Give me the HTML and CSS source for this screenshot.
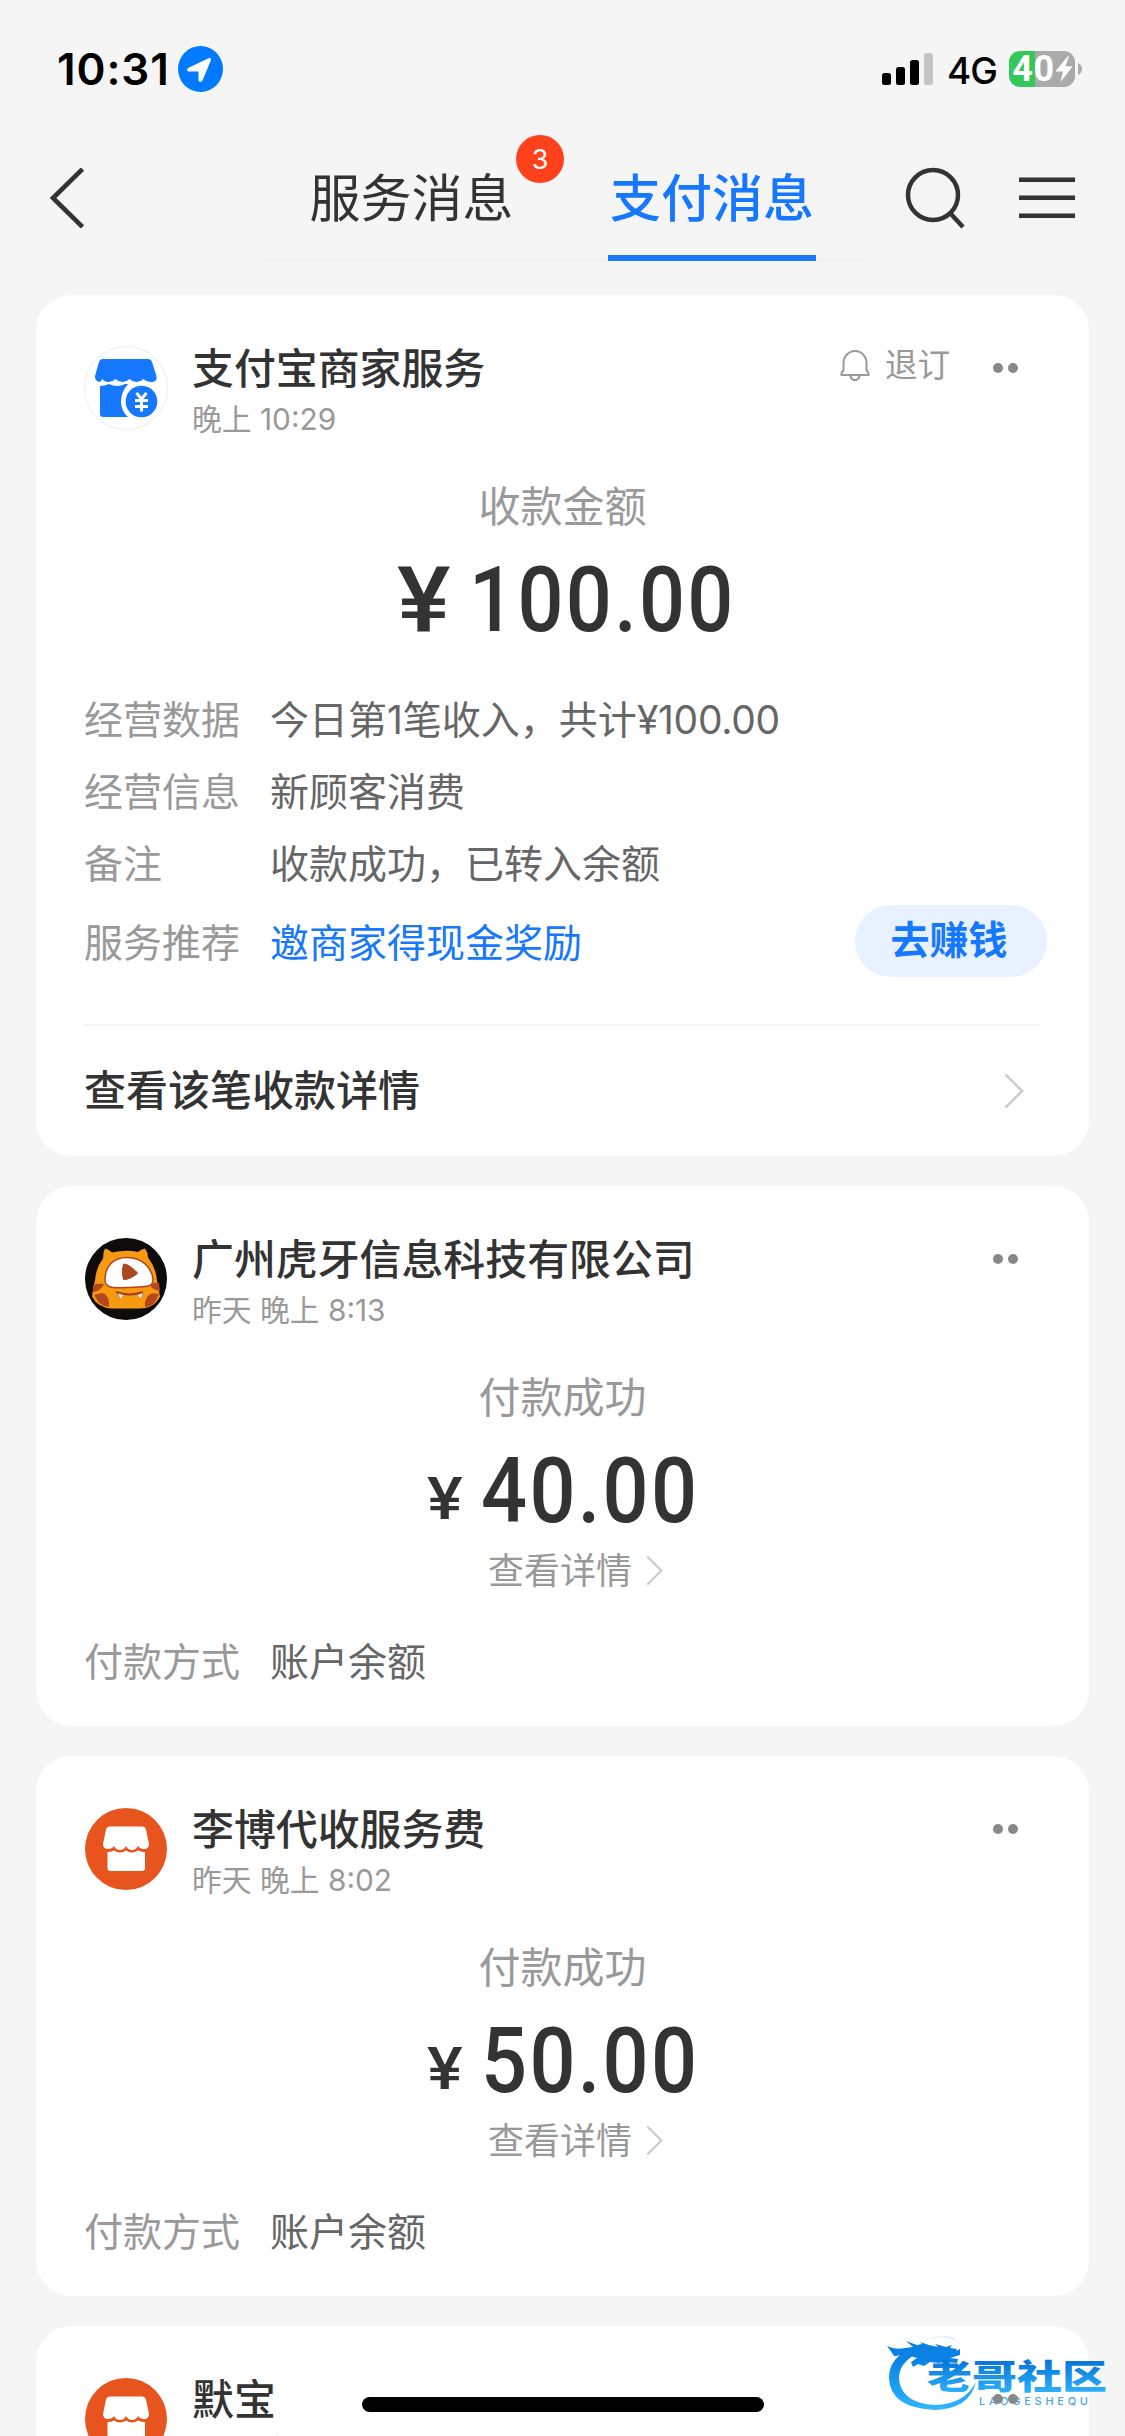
FILE: index.html
```html
<!DOCTYPE html>
<html lang="zh-CN">
<head>
<meta charset="utf-8">
<title>支付消息</title>
<link rel="stylesheet" href="styles.css">
</head>
<body>
<svg width="0" height="0" class="defs">
  <symbol id="shop" viewBox="0 0 84 84">
    <circle cx="42" cy="42" r="41" fill="#e8541e"/>
    <path d="M26 19.500h32q3 0 4 3l3 14.500q0 5-5 5-4 0-6-3-2 4-6 4t-6-4q-2 4-6 4t-6-4q-2 3-6 3-5 0-5-5l3-14.500q1-3 4-3z" fill="#fff"/>
    <path d="M23.500 45q4 0 6.500-1.500 3 2 6 2t6-2q3 2 6 2t6-2q3 1.500 7 1.500v16q0 3-3 3H26.500q-3 0-3-3z" fill="#fff"/>
  </symbol>
  <symbol id="arrow" viewBox="0 0 20 36"><path d="M1.500 1.500 18 18 1.500 34.500" fill="none" stroke="#ccc" stroke-width="2.600"/></symbol>
</svg>
<div class="screen">
  <div class="status">
    <span class="time">10:31</span>
    <svg class="loc" viewBox="0 0 45 46"><ellipse cx="22.500" cy="23" rx="22.500" ry="23" fill="#007aff"/><path d="M10 22 30.500 12.300q3-1 2.300 2.200L24.500 34.500q-2.500 3-4-.2V25.500H11q-3.400-.8-1-3.500z" fill="#fff"/></svg>
    <svg class="signal" viewBox="0 0 52 32"><rect y="20" width="9" height="12" rx="2.500"/><rect x="14" y="14" width="9" height="18" rx="2.500"/><rect x="28" y="7" width="9" height="25" rx="2.500"/><rect x="42" width="9" height="32" rx="2.500" fill="#c4c4c4"/></svg>
    <span class="net">4G</span>
    <div class="battery"><span>40</span><svg viewBox="0 0 16 26"><path d="M12 0 0 14.500q-.4 1 .6 1H7L4.500 26 16 11.300q.3-1-.7-1H9.500L12.800.6z" fill="#fff"/></svg></div>
    <svg class="nub" viewBox="0 0 4 12"><path d="M0 0q4 2 4 6t-4 6z" fill="#aaa"/></svg>
  </div>
  <div class="nav">
    <svg class="back" viewBox="0 0 36 60"><path d="M33.500 1 4 30l29.500 29" fill="none" stroke="#333" stroke-width="4.600"/></svg>
    <div class="tabs">
      <div class="tab">服务消息<span class="badge">3</span></div>
      <div class="tab active">支付消息</div>
    </div>
    <svg class="search" viewBox="0 0 62 62"><circle cx="28" cy="28" r="25" fill="none" stroke="#333" stroke-width="4.500"/><path d="M45 46 58 60" stroke="#333" stroke-width="4.500"/></svg>
    <svg class="menu" viewBox="0 0 56 42"><path d="M0 2.800h56M0 20.800h56M0 38.800h56" stroke="#333" stroke-width="4.400"/></svg>
  </div>

  <div class="card first">
    <div class="head">
      <svg class="avatar" viewBox="0 0 84 84"><circle cx="42" cy="42" r="41.400" fill="#fff" stroke="#f1f1f1" stroke-width="1.200"/>
        <path d="M19 13h45q3 0 4 3l4.500 14q1 6-5 6-5 0-8-3-3 3-7 3t-7-3q-3 3-7 3t-7-3q-3 3-7 3t-6-3q-2 3-3 3-5-1-4.500-6L15 16q1-3 4-3z" fill="#1677ff"/>
        <path d="M16 40q5 0 9-2 4 2 8 2t8-2h3q-7 8-7 18 0 9 7 15H19q-3 0-3-3z" fill="#1677ff"/>
        <circle cx="57.500" cy="55.500" r="15.800" fill="#1677ff"/>
        <path d="M52.500 47l5 6 5-6M51 54.500h13M51 60.500h13M57.500 53v12.500" stroke="#fff" stroke-width="3" fill="none"/></svg>
      <div class="who"><div class="name">支付宝商家服务</div><div class="when">晚上 10:29</div></div>
      <div class="unsub"><svg viewBox="0 0 30 32"><path d="M3.500 21V14a11.500 12 0 0 1 23 0v7q2.500 3 2 5H1.500q-.5-2 2-5z" fill="none" stroke="#999" stroke-width="2"/><path d="M10.500 26.500q.5 4.500 4.500 4.500t4.500-4.500" fill="none" stroke="#999" stroke-width="2.200"/></svg>退订</div>
      <div class="dots"><i></i><i></i></div>
    </div>
    <div class="caption">收款金额</div>
    <div class="amount large"><b class="yen">¥</b><b class="num">100.00</b></div>
    <div class="rows">
      <div class="row"><span>经营数据</span><em>今日第1笔收入，共计<u>¥100.00</u></em></div>
      <div class="row"><span>经营信息</span><em>新顾客消费</em></div>
      <div class="row"><span>备注</span><em>收款成功，已转入余额</em></div>
      <div class="row tall"><span>服务推荐</span><em class="link">邀商家得现金奖励</em><div class="pill">去赚钱</div></div>
    </div>
    <div class="foot"><div>查看该笔收款详情</div><svg><use href="#arrow"/></svg></div>
  </div>

  <div class="card">
    <div class="head">
      <svg class="avatar" viewBox="0 0 84 84"><circle cx="42" cy="42" r="41" fill="#0d0c0a"/>
        <path d="M21 11.500q4 1 7 4 14-3 26-.5 3-3 7-3.500 3 4 3 9 8 10 9 23l3 16q-6 12-20 12H28Q14 71 8 59.500q1-9 3-16 1-13 8-22 0-6 2-10z" fill="#f79a12"/>
        <path d="M9 48q5-2 11-1-3 7-11 8zM75 46q-5-1-9 2 2 5 10 6zM10 58q7-3 11-1 5 5 4 13-6-1-10-4zM75 57q-8-2-10 1-5 5-4 12 6 0 10-5z" fill="#b4481a"/>
        <path d="M43 20.500c16 0 25 11 26 22 0 8-5 7-27 8-17 1-21-1-21-8 0-13 8-22 22-22z" fill="#fff" stroke="#b4481a" stroke-width="1.500"/>
        <path d="M39.500 27q3-.5 8 3.500t6 5.500q-1 2-6 4.500t-8 2q-2.500-8 0-15.500z" fill="#ac4722" stroke="#ac4722" stroke-width="1"/>
        <path d="M32 55q13 5 27 0" fill="none" stroke="#a33b14" stroke-width="2"/><path d="M34 56.500l2 6 4-4.500zM53 58l4 4 2-6z" fill="#fff" stroke="#c76a20" stroke-width=".6"/></svg>
      <div class="who"><div class="name">广州虎牙信息科技有限公司</div><div class="when">昨天 晚上 8:13</div></div>
      <div class="dots"><i></i><i></i></div>
    </div>
    <div class="caption">付款成功</div>
    <div class="amount"><b class="yen">¥</b><b class="num">40.00</b></div>
    <div class="detail"><div>查看详情</div><svg><use href="#arrow"/></svg></div>
    <div class="row"><span>付款方式</span><em>账户余额</em></div>
  </div>

  <div class="card">
    <div class="head">
      <svg class="avatar"><use href="#shop"/></svg>
      <div class="who"><div class="name">李博代收服务费</div><div class="when">昨天 晚上 8:02</div></div>
      <div class="dots"><i></i><i></i></div>
    </div>
    <div class="caption">付款成功</div>
    <div class="amount"><b class="yen">¥</b><b class="num">50.00</b></div>
    <div class="detail"><div>查看详情</div><svg><use href="#arrow"/></svg></div>
    <div class="row"><span>付款方式</span><em>账户余额</em></div>
  </div>

  <div class="card">
    <div class="head">
      <svg class="avatar"><use href="#shop"/></svg>
      <div class="who"><div class="name">默宝</div><div class="when">昨天 晚上</div></div>
      <div class="dots"><i></i><i></i></div>
    </div>
  </div>

  <svg class="mark" viewBox="0 0 225 84">
    <defs><linearGradient id="g" gradientUnits="userSpaceOnUse" x1="0" y1="10" x2="0" y2="80"><stop offset="0" stop-color="#0a7fe0"/><stop offset=".3" stop-color="#0a84e6"/><stop offset="1" stop-color="#2fb8ff"/></linearGradient>
    <linearGradient id="t" x1="0" y1="0" x2="0" y2="1"><stop offset=".25" stop-color="#0878dc"/><stop offset=".9" stop-color="#2fb4fb"/></linearGradient></defs>
    <path d="M27 18Q4 26 4 47q1 30 46 32 34-1 41-28-11 22-41 23-33-2-36-25-1-17 19-27z" fill="url(#g)"/>
    <path d="M2 15q8 4 18 2l8-1-7-6 11 4 5-1-2-2 9 3 9 2-3-3 11 3 6-2-2 3 7 1-1 2 4-2v6l-10 3 8 1-1 4-12-1-6 1-9-1-6 4-6-2-5 3-2-5 6-4-10-3-13 1Q6 20 2 15z" fill="url(#g)"/>
    <path d="M45 8q12-5 26 1M58 5q9 0 14 6" fill="none" stroke="#d9eefb" stroke-width="1"/>
    <text x="42" y="58" class="mark-cn" textLength="180" lengthAdjust="spacingAndGlyphs" fill="url(#t)">老哥社区</text>
    <text x="94" y="74" class="mark-en" textLength="109" fill="#4ba6e4">LAOGESHEQU</text>
  </svg>
  <div class="home"></div>
</div>
</body>
</html>
```
FILE: styles.css
```css
* { box-sizing: border-box; }
body { margin: 0; background: #f5f5f5; }
.defs { position: absolute; }
.screen { position: relative; width: 1125px; height: 2436px; overflow: hidden; background: #f5f5f5; font-family: Inter, "Noto Sans CJK SC", sans-serif; color: #333; }
svg { display: block; flex: none; }
.status { display: flex; align-items: center; height: 138px; padding-left: 57px; color: #000; }
.time { width: 121px; font-size: 44px; font-weight: 600; letter-spacing: 0.9px; }
.loc { width: 45px; height: 46px; }
.signal { width: 52px; height: 32px; margin-left: 659px; }
.net { margin-left: 13px; width: 62px; font-size: 37px; font-weight: 450; letter-spacing: -1px; line-height: 1; padding-top: 2px; }
.battery { display: flex; align-items: center; justify-content: center; gap: 1px; width: 66px; height: 36px; border-radius: 11px; background: linear-gradient(90deg, #34c759 26px, #aaa 26px); color: #fff; font-size: 36px; font-weight: 700; }
.battery span { font-family: Roboto, sans-serif; line-height: 36px; letter-spacing: 0.5px; }
.battery svg { width: 16px; height: 26px; }
.nub { width: 4px; height: 12px; margin-left: 3px; }
.nav { display: flex; height: 157px; padding-left: 49px; }
.back { width: 36px; height: 60px; margin-top: 30px; }
.tabs { display: flex; gap: 90px; width: 600px; height: 123px; margin-left: 177px; padding-left: 45px; border-bottom: 1px solid #ebebeb; }
.tab { position: relative; height: 123px; width: 209px; text-align: center; font-size: 51px; line-height: 122px; }
.active { width: 208px; margin-left: 2px; color: #1677ff; font-weight: 500; border-bottom: 6px solid #1677ff; }
.badge { position: absolute; left: 209px; top: -3px; width: 48px; height: 48px; border-radius: 50%; background: #ff411c; color: #fff; font-size: 27px; line-height: 49px; }
.search { width: 62px; height: 62px; margin: 29px 0 0 43px; }
.menu { width: 56px; height: 42px; margin: 39px 0 0 52px; }
.card { width: 1053px; height: 540px; margin: 0 0 30px 36px; padding: 51px 48px 0; border-radius: 36px; background: #fff; }
.first { height: 861px; }
.head { display: flex; height: 84px; }
.avatar { width: 84px; height: 84px; }
.who { flex: 1; margin-left: 24px; white-space: nowrap; }
.name { margin-top: -5px; font-size: 41.900px; line-height: 56px; font-weight: 500; }
.when { font-size: 29.800px; line-height: 44px; color: #999; }
.unsub { display: flex; gap: 15px; height: 36px; font-size: 32.500px; line-height: 36px; color: #999; margin: 2px 43px 0 0; }
.unsub svg { width: 30px; height: 32px; margin-top: 1px; }
.dots { position: relative; z-index: 3; display: flex; gap: 5px; height: 10px; margin: 17px 23px 0 0; }
.dots i { width: 10px; height: 10px; border-radius: 50%; background: #888; }
.caption { margin-top: 49px; text-align: center; font-size: 42px; line-height: 56px; color: #999; }
.amount { display: flex; align-items: baseline; height: 100px; margin-top: 16px; padding-left: 343px; font-family: Roboto, sans-serif; line-height: 100px; }
.amount b { font-weight: 500; transform-origin: left; }
.yen { width: 38px; margin-right: 16px; font-size: 60px; transform: translateY(-3px) scaleX(1.12); }
.num { font-size: 90px; letter-spacing: 2.600px; transform: scaleX(0.9); }
.large { padding-left: 313px; }
.large .yen { width: 57px; margin-right: 15px; font-size: 90px; transform: scaleX(1.12); }
.rows { padding-top: 30px; }
.row { display: flex; align-items: center; height: 72px; font-size: 39px; white-space: nowrap; }
.row span { width: 186px; color: #999; }
.row em { flex: 1; font-style: normal; color: #666; }
.row u { text-decoration: none; letter-spacing: -0.3px; }
.row .link { color: #1677ff; }
.tall { height: 85px; }
.pill { width: 192px; height: 72px; margin: 3px -6px 0 0; padding-right: 4px; border-radius: 36px; background: #e7f1ff; color: #1677ff; font-weight: 700; line-height: 70px; text-align: center; }
.foot { display: flex; justify-content: space-between; align-items: center; height: 132px; margin-top: 42px; border-top: 2px solid #f5f5f5; font-size: 42px; font-weight: 500; padding-right: 17px; }
.foot div { padding-bottom: 8px; }
.foot svg { width: 20px; height: 36px; }
.detail { display: flex; justify-content: center; align-items: center; gap: 14px; height: 50px; margin-top: 3px; padding-left: 26px; font-size: 36px; color: #999; }
.detail div { padding-bottom: 5px; }
.detail svg { width: 17px; height: 31px; }
.detail + .row { margin-top: 28px; }
.mark { position: absolute; z-index: 2; left: 885px; top: 2331px; width: 225px; height: 84px; }
.mark-cn { font: 900 34px "Noto Sans CJK SC", sans-serif; }
.mark-en { font: 500 11px Inter, sans-serif; }
.home { position: absolute; z-index: 4; left: 362px; top: 2397px; width: 402px; height: 15px; border-radius: 8px; background: #000; }
```
